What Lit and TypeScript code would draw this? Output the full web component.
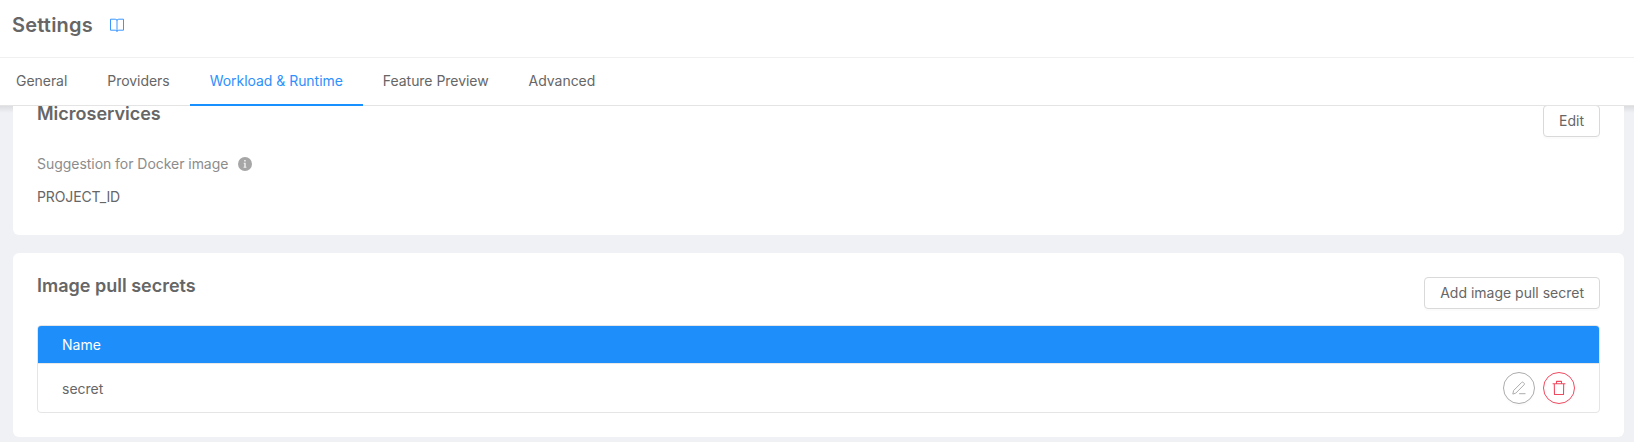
import { LitElement, html, css, svg } from "lit";
import { customElement } from "lit/decorators.js";

const bookIcon = svg`<svg class="book" viewBox="0 0 14 14" width="14" height="14" fill="none" stroke="currentColor"><path d="M.5 1.2h4.7q1.8 0 1.8 1.5q0-1.5 1.8-1.5h4.7v11H8.8Q7 12.2 7 13.5Q7 12.2 5.2 12.2H.5zM7 2.5v11"/></svg>`;

const infoIcon = svg`<svg class="info" viewBox="0 0 14 14" width="14" height="14"><circle cx="7" cy="7" r="7" fill="#a6a6a6"/><path d="M6.2 3h1.5v1.5H6.2zM5.7 5.8h2v4h.7v.9H5.6v-.9h.7V6.7h-.6z" fill="#fff" fill-opacity=".85"/></svg>`;

const pencilIcon = svg`<svg viewBox="0 0 16 16" width="16" height="16" fill="none" stroke="currentColor" stroke-linecap="round" stroke-linejoin="round"><path d="M1.9 13.7l.7-3.2 8.1-8.1q.8-.7 1.6 0l.8.8q.7.8 0 1.6L5 12.9zM8.5 13.7h5.6"/></svg>`;

const trashIcon = svg`<svg viewBox="0 0 16 16" width="16" height="16" fill="none" stroke="currentColor" stroke-width="1.1" stroke-linejoin="round"><path d="M1.6 3.7h12.8M5.5 3.5V1.4h5v2.1M3.3 4l.2 10.5h9l.2-10.5"/></svg>`;

@customElement("app-root")
export class AppRoot extends LitElement {
  static styles = css`
    :host {
      display: flex;
      flex-direction: column;
      height: 442px;
      overflow: hidden;
      background: #f0f1f5;
      color: #666;
      font: 14px/22px Inter, sans-serif;
    }
    * {
      box-sizing: border-box;
    }
    h1, h2, p {
      margin: 0;
    }
    svg {
      display: block;
    }
    header {
      display: flex;
      align-items: center;
      flex: none;
      height: 58px;
      padding: 0 12px 7px;
      gap: 17px;
      background: #fff;
      border-bottom: 1px solid #f0f0f0;
    }
    h1 {
      font-size: 20px;
      line-height: 28px;
      font-weight: 600;
      letter-spacing: 0.2px;
    }
    .book {
      color: #3a97ff;
    }
    nav {
      display: flex;
      flex: none;
      height: 48px;
      padding-left: 16px;
      gap: 40px;
      background: #fff;
      box-shadow: inset 0 -1px #e4e4e4;
      letter-spacing: -0.04px;
    }
    .tab {
      padding: 12px 0;
    }
    .active {
      margin: 0 -20px;
      padding: 12px 20px 0;
      color: #2e90fd;
      border-bottom: 2px solid #1890ff;
    }
    main {
      display: flex;
      flex-direction: column;
      flex: 1;
      min-height: 0;
      overflow: hidden;
      padding: 0 10px 0 13px;
      background: linear-gradient(#dcdde0, #f0f1f5 7px);
    }
    .card {
      flex: none;
      padding: 24px;
      border-radius: 6px;
      background: #fff;
    }
    .micro {
      height: 154px;
      margin: -25px 0 18px;
    }
    .head {
      display: flex;
      justify-content: space-between;
      align-items: flex-start;
      height: 32px;
    }
    h2 {
      font-size: 18px;
      line-height: 18px;
      font-weight: 600;
    }
    button {
      height: 32px;
      padding: 0 15px;
      border: 1px solid #d9d9d9;
      border-radius: 4px;
      background: #fff;
      box-shadow: 0 2px 0 rgba(0, 0, 0, 0.016);
      font: inherit;
      color: inherit;
    }
    .label {
      display: flex;
      align-items: center;
      gap: 10px;
      margin-top: 16px;
      color: #8c8c8c;
      letter-spacing: -0.04px;
    }
    .value {
      margin-top: 11px;
      letter-spacing: -0.12px;
    }
    .table {
      margin-top: 16px;
      height: 88px;
      border: 1px solid #e4e5e7;
      border-radius: 4px;
      overflow: hidden;
    }
    .th {
      height: 38px;
      padding: 8px 24px 7px;
      background: #1e8efb;
      background-clip: padding-box;
      border-bottom: 1px solid #e8e8e8;
      color: #fff;
    }
    .tr {
      display: flex;
      align-items: center;
      height: 48px;
      gap: 8px;
      padding: 0 24px;
    }
    .name {
      flex: 1;
      padding-top: 1px;
    }
    .round {
      display: flex;
      align-items: center;
      justify-content: center;
      width: 32px;
      padding: 0;
      border-radius: 50%;
      border-color: #acacac;
      color: #acacac;
    }
    .danger {
      border-color: #f04a60;
      color: #f04a60;
    }
  `;

  render() {
    return html`
      <header><h1>Settings</h1>${bookIcon}</header>
      <nav>
        ${["General", "Providers", "Workload & Runtime", "Feature Preview", "Advanced"].map(
          (name, i) => html`<div class="tab ${i === 2 ? "active" : ""}">${name}</div>`
        )}
      </nav>
      <main>
        <section class="card micro">
          <div class="head"><h2>Microservices</h2><button>Edit</button></div>
          <p class="label">Suggestion for Docker image ${infoIcon}</p>
          <p class="value">PROJECT_ID</p>
        </section>
        <section class="card">
          <div class="head"><h2>Image pull secrets</h2><button>Add image pull secret</button></div>
          <div class="table">
            <div class="th">Name</div>
            <div class="tr">
              <span class="name">secret</span>
              <button class="round" aria-label="Edit">${pencilIcon}</button>
              <button class="round danger" aria-label="Delete">${trashIcon}</button>
            </div>
          </div>
        </section>
      </main>
    `;
  }
}
